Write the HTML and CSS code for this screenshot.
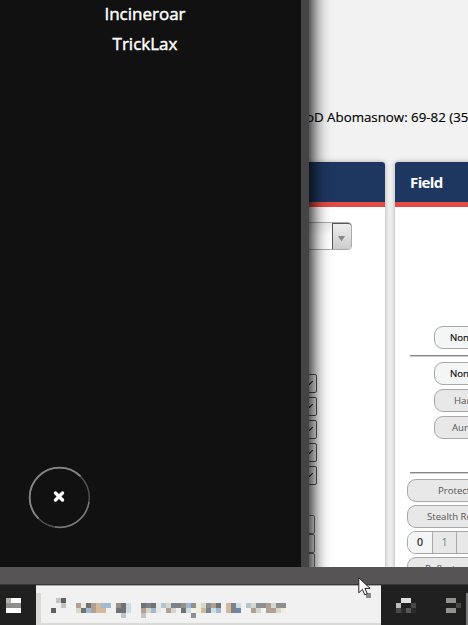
FILE: index.html
```html
<!DOCTYPE html>
<html lang="en">
<head>
<meta charset="utf-8">
<title>Damage calculator</title>
<link rel="stylesheet" href="styles.css">
</head>
<body>
<div class="screen">
  <main class="page">
    <p class="result">oD Abomasnow: 69-82 (35</p>
    <div class="panels">
      <section class="panel">
        <h2></h2>
        <div class="combo"><span></span><b><svg width="8" height="6"><path d="M0 0h7L3.5 5.5z" fill="#888"/></svg></b></div>
        <div class="selects"><i></i><i></i><i></i><i></i><i></i></div>
        <div class="inputs"><i></i><i></i><i></i></div>
      </section>
      <section class="panel field">
        <h2>Field</h2>
        <div class="options">
          <div class="btn on narrow">None</div>
          <hr>
          <div class="btn on narrow">None</div>
          <div class="btn narrow harsh">Harsh</div>
          <div class="btn narrow aura">Aurora</div>
          <hr class="second">
          <div class="btn protect">Protect</div>
          <div class="btn rock">Stealth Rock</div>
          <div class="btn counts"><span class="on">0</span><span>1</span><span></span></div>
          <div class="btn reflect">Reflect</div>
        </div>
      </section>
    </div>
  </main>
  <aside class="overlay">
    <div class="names"><span>Incineroar</span><span>TrickLax</span></div>
    <svg class="close" width="64" height="64" viewBox="0 0 64 64" fill="none">
      <circle cx="31.5" cy="31.5" r="29.8" stroke="#505050" stroke-width="1.5"/>
      <path d="M10.4 52.6A29.8 29.8 0 0 1 52.6 10.4" stroke="#858585" stroke-width="1.8"/>
      <path d="M61 36A29.8 29.8 0 0 1 27 61" stroke="#777" stroke-width="1.5"/>
      <path d="M27.5 27l7 7M34.5 27l-7 7" stroke="#fff" stroke-width="3.4" stroke-linecap="round"/>
    </svg>
  </aside>
</div>
<div class="frame"></div>
<footer class="taskbar">
  <div class="start"><svg width="36" height="40" shape-rendering="crispEdges"><path fill="#fff" d="M11 13h10v5H11zM6 23h15v5H6z"/><path fill="#b4b0ac" d="M6 13h5v5H6z"/><path fill="#8e8e8c" d="M6 18h15v5H6z"/></svg></div>
  <div class="search">
    <svg width="345" height="40" viewBox="36 585 345 40" shape-rendering="crispEdges">
      <path fill="#d9d9d8" d="M36 593h5v32h-5zM36 623h345v2H36z"/>
      <path fill="#c4c4c4" d="M56 598h5v5h-5zM61 603h5v5h-5zM121 613h5v5h-5zM141 613h5v5h-5z"/>
      <path fill="#606060" d="M61 598h5v5h-5zM51 608h5v5h-5z"/>
      <path fill="#b4a092" d="M76 603h5v5h-5zM91 603h5v10h-5zM141 608h5v5h-5zM166 608h5v5h-5zM211 603h5v5h-5zM266 603h5v10h-5zM271 608h5v5h-5zM251 608h5v5h-5z"/>
      <path fill="#d3b99b" d="M96 603h5v10h-5zM101 608h5v5h-5zM201 608h5v5h-5zM226 603h5v10h-5z"/>
      <path fill="#9ebbd3" d="M101 603h10v5h-10zM86 608h5v5h-5zM151 608h5v5h-5zM186 603h5v5h-5zM216 608h5v5h-5z"/>
      <path fill="#707274" d="M86 603h5v5h-5zM81 608h5v5h-5zM121 603h5v10h-5zM116 608h5v5h-5zM141 603h5v5h-5zM151 603h5v5h-5zM181 608h5v5h-5zM216 603h5v5h-5z"/>
      <path fill="#7b828c" d="M146 603h5v5h-5zM171 603h10v5h-10zM206 608h5v5h-5zM231 603h5v10h-5z"/>
      <path fill="#978f88" d="M116 603h5v5h-5zM181 603h5v5h-5z"/>
      <path fill="#8d8f91" d="M191 603h5v5h-5zM191 613h5v5h-5zM206 603h5v5h-5zM256 603h10v5h-10zM276 603h10v5h-10z"/>
      <path fill="#d8d5ce" d="M76 608h5v5h-5zM146 608h5v5h-5zM166 603h5v5h-5zM171 608h5v5h-5zM201 603h5v5h-5zM251 603h5v5h-5zM256 608h5v5h-5zM271 603h5v5h-5zM276 608h5v5h-5z"/>
      <path fill="#cddde4" d="M126 603h5v10h-5zM186 608h5v5h-5zM211 608h5v5h-5zM236 603h5v5h-5z"/>
      <path fill="#b4c6d0" d="M161 603h5v5h-5zM246 603h5v5h-5z"/>
      <path fill="#6d89a9" d="M236 608h5v5h-5z"/>
      <path fill="#efedde" d="M196 603h5v10h-5zM281 608h5v5h-5z"/>
      <path fill="#e8e9e5" d="M81 603h5v5h-5zM156 603h5v10h-5z"/>
      <path fill="#888" d="M366 593h5v5h-5z"/>
    </svg>
  </div>
  <div class="tray">
    <svg width="87" height="40" viewBox="381 585 87 40" shape-rendering="crispEdges">
      <path fill="#dee0df" d="M401 598h10v5h-10z"/><path fill="#b9bdbf" d="M396 603h5v5h-5z"/>
      <path fill="#484848" d="M411 603h5v5h-5zM396 608h5v5h-5zM456 603h5v5h-5z"/>
      <path fill="#292b2e" d="M401 608h5v5h-5zM411 608h5v5h-5z"/><path fill="#5b5656" d="M406 608h5v5h-5z"/>
      <path fill="#92928f" d="M446 598h10v5h-10zM446 608h10v5h-10z"/><path fill="#777" d="M466 593h2v32h-2z"/>
    </svg>
  </div>
</footer>
<svg class="cursor" width="13" height="19" viewBox="0 0 13 19"><path d="M.8.8v15l3.6-3.4 2.4 5.4 2.5-1.2-2.4-5.2h5.2z" fill="#fff" stroke="#222"/><path d="M0 16h5v3H0z" fill="#f0f0f0"/></svg>
</body>
</html>
```
FILE: styles.css
```css
* { box-sizing: border-box; }
body { margin: 0; width: 468px; height: 625px; overflow: hidden; background: #f2f2f2; font-family: "Open Sans", sans-serif; }
.screen { position: relative; height: 567px; overflow: hidden; }
.page { width: 520px; padding-left: 305px; }
.result { margin: 0; padding: 107px 0 0 1px; height: 162px; font-size: 13.3px; line-height: 21px; color: #000; white-space: nowrap; -webkit-text-stroke: .15px #000; }
.panels { display: flex; gap: 10px; }
.panel { width: 80px; height: 430px; background: #fff; border-radius: 3px 3px 0 0; box-shadow: 0 0 5px #aaa; flex: none; }
.panel h2 { margin: 0; height: 45px; background: #1e3760; border-bottom: 5px solid #e34b46; border-radius: 3px 3px 0 0; color: #fff; font-size: 15px; line-height: 41px; letter-spacing: -.6px; }
.field { width: 140px; }
.field h2 { padding-left: 15px; }
.combo { display: flex; width: 47px; height: 28px; margin-top: 15px; border: 1px solid #aaa; border-radius: 4px; background: linear-gradient(#eee, #fff 50%); }
.combo span { flex: 1; }
.combo b { width: 19px; border-left: 1px solid #555; border-top: 1px solid #555; background: linear-gradient(#eee, #ccc); display: flex; align-items: center; justify-content: center; border-radius: 0 3px 3px 0; padding-top: 4px; }
.selects { margin-top: 124px; display: flex; flex-direction: column; gap: 4px; }
.selects i { width: 12px; height: 19px; border: 1px solid #555; border-radius: 2px; display: flex; align-items: center; padding-left: 1px; }
.selects i::before { content: ""; width: 4px; height: 4px; border: solid #112; border-width: 0 1.5px 1.5px 0; transform: translateY(-2px) rotate(45deg); }
.inputs { margin-top: 30px; }
.inputs i { display: block; width: 10px; height: 19px; border: 1px solid #777; border-radius: 2px; }
.options { padding: 119px 0 0 12px; }
.btn { height: 23px; margin-bottom: 4px; padding-left: 30px; border: 1px solid #a8a8a8; border-radius: 9px; background: #e8e8e8; color: #555; font-size: 9.6px; line-height: 21px; white-space: nowrap; }
.narrow { margin-left: 27px; padding-left: 15px; }
.btn.on { background: #f4f6f6; color: #111; -webkit-text-stroke: .2px #111; }
.harsh { padding-left: 19px; }
.aura { padding-left: 17px; }
.options hr { height: 2px; margin: 6px 0 5px 3px; border: 0; border-top: 1px solid #888; border-bottom: 1px solid #ccc; }
.options .second { margin-top: 33px; margin-bottom: 5px; }
.protect, .rock, .counts { margin-bottom: 3px; }
.rock { padding-left: 19px; }
.counts { display: flex; padding: 0; overflow: hidden; }
.counts span { width: 24px; border-right: 1px solid #a8a8a8; text-align: center; color: #69808e; font-size: 10.5px; }
.counts .on { width: 25px; background: #f4f6f6; color: #111; -webkit-text-stroke: .2px #111; }
.reflect { padding-left: 17px; color: #456; }
.overlay { position: absolute; left: 0; top: -20px; width: 309px; height: 607px; padding-top: 19px; background: #111; border-right: 8px solid #444; box-shadow: 0 0 17px 3px #000; }
.names { display: flex; flex-direction: column; width: 290px; text-align: center; color: #fff; font: 17px/30px "Open Sans", sans-serif; height: 467px; }
.names span { letter-spacing: 0; -webkit-text-stroke: .45px #fff; }
.close { display: block; margin-left: 28px; }
.frame { height: 18px; background: #565454; border-bottom: 1px solid #393636; }
.taskbar { display: flex; height: 40px; background: #202020; }
.start { width: 36px; }
.search { width: 345px; background: #f1f1f1; box-shadow: inset 0 1px #aaa; }
.tray { flex: 1; }
.taskbar svg { display: block; }
.cursor { position: absolute; left: 358px; top: 577px; }
```
